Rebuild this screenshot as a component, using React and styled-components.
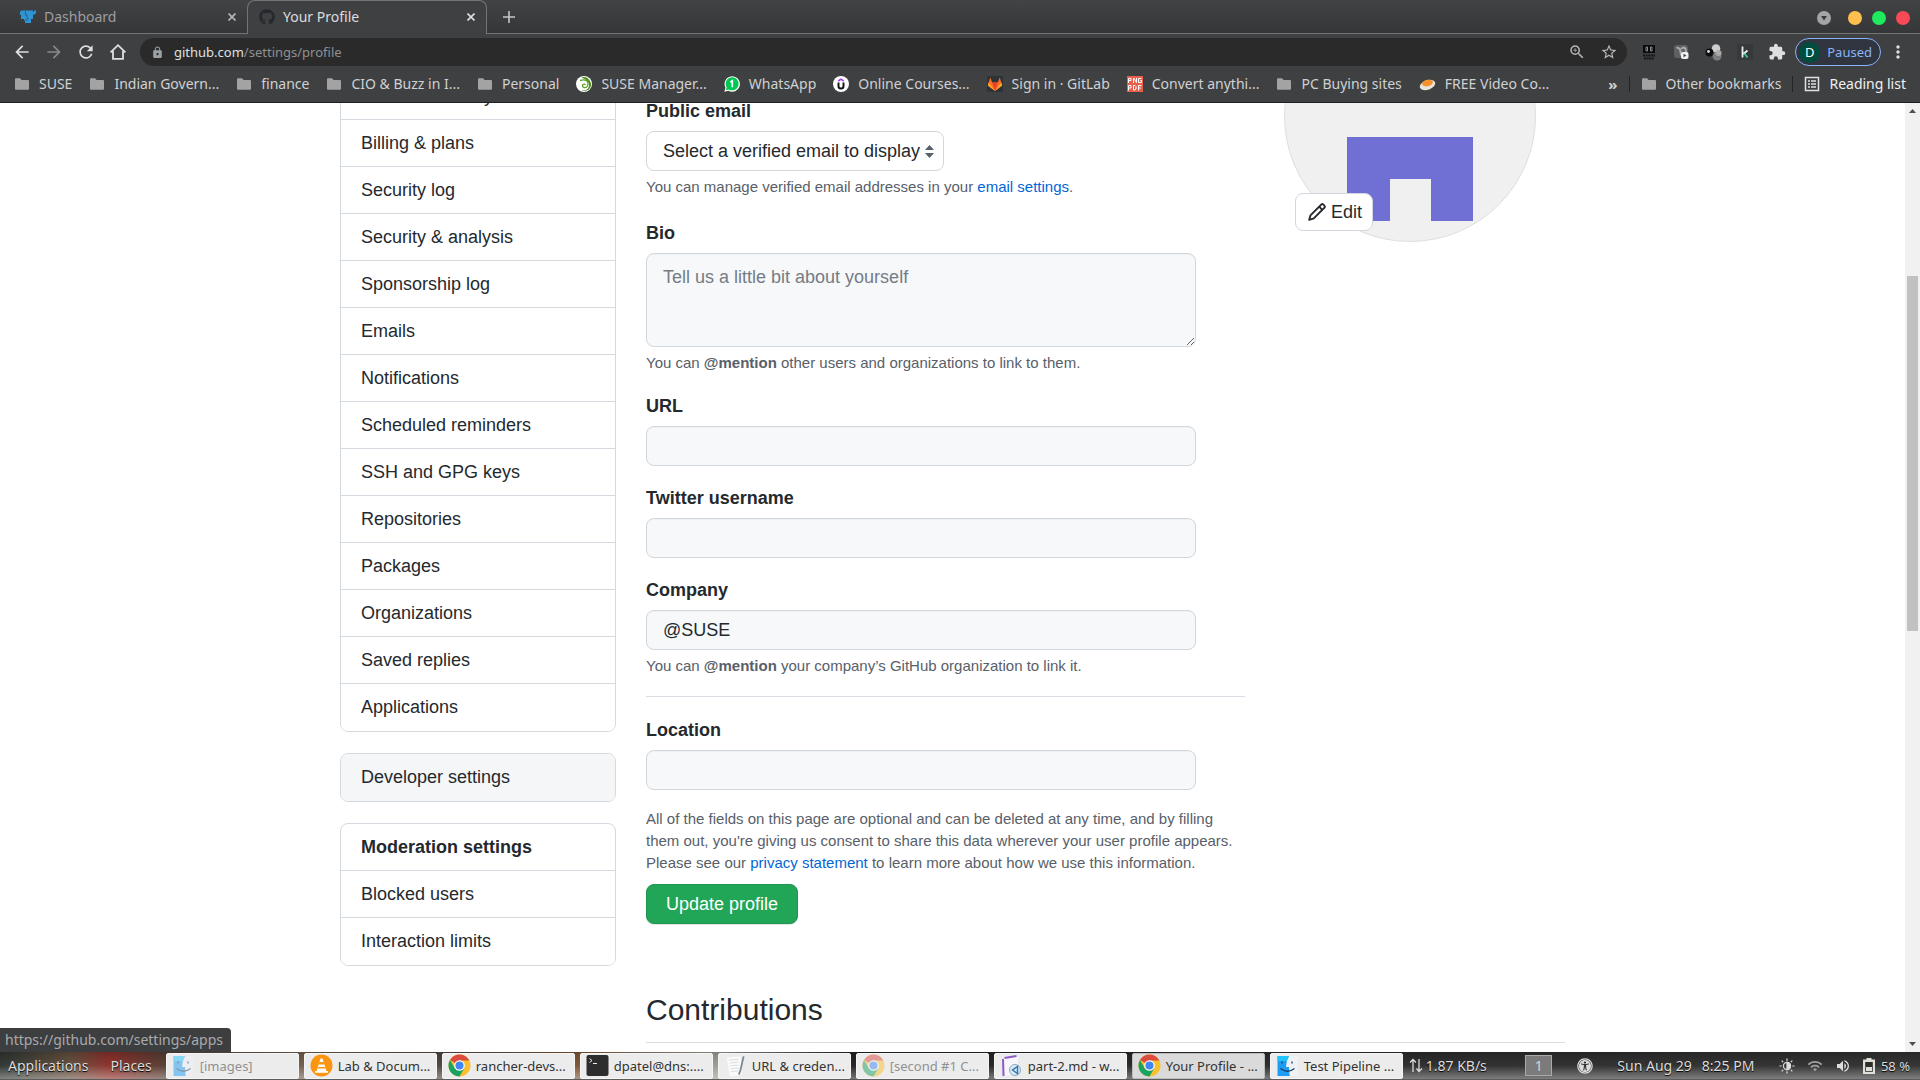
import React from "react";
import styled, { createGlobalStyle, css } from "styled-components";
import {
  MdArrowBack,
  MdArrowForward,
  MdRefresh,
  MdLock,
  MdZoomIn,
  MdStarBorder,
  MdExtension,
  MdMoreVert,
  MdWifi,
  MdVolumeUp,
} from "react-icons/md";
import { FaGithub, FaUniversalAccess } from "react-icons/fa";

const Global = createGlobalStyle`
  * { box-sizing: border-box; }
  body { margin: 0; background: #fff; overflow: hidden; }
  button, input, select, textarea { font: inherit; color: inherit; }
`;

const uiFont = css`
  font-family: "Noto Sans", "Open Sans", sans-serif;
  font-size: 14px;
`;

const Screen = styled.div`
  position: relative;
  display: flex;
  flex-direction: column;
  height: 100vh;
  overflow: hidden;
`;

/* ---------- browser frame ---------- */

const TabStrip = styled.header`
  ${uiFont}
  display: flex;
  height: 34px;
  flex: none;
  background: linear-gradient(#424345, #353638);
  box-shadow: inset 0 -1px #737476;
  color: #9d9ea0;
`;

const Tab = styled.div`
  display: flex;
  align-items: center;
  gap: 8px;
  width: ${(p) => (p.$active ? 240 : 247)}px;
  padding: 0 5px ${(p) => (p.$active ? 2 : 0)}px ${(p) => (p.$active ? 11 : 20)}px;
  ${(p) =>
    p.$active &&
    css`
      color: #dcddde;
      background: #3f4042;
      border: 1px solid #737476;
      border-bottom: 0;
      border-radius: 8px 8px 0 0;
    `}
`;

const TabTitle = styled.span`
  flex: 1;
  line-height: 20px;
`;

const PlainButton = styled.button`
  display: flex;
  align-items: center;
  justify-content: center;
  width: 20px;
  height: 20px;
  padding: 0;
  border: 0;
  background: none;
  color: ${(p) => p.$color || "#dedfe0"};
`;

const NewTab = styled(PlainButton)`
  width: 44px;
  height: 33px;
`;

const WindowControls = styled.div`
  display: flex;
  align-items: center;
  gap: 10px;
  margin-left: auto;
  padding: 2px 10px 0 0;
`;

const WindowDot = styled.button`
  width: 14px;
  height: 14px;
  padding: 0;
  border: 0;
  border-radius: 50%;
  background: ${(p) => p.$color};
`;

const TabSearch = styled(PlainButton)`
  width: 14px;
  height: 14px;
  margin-right: 7px;
`;

const Toolbar = styled.nav`
  ${uiFont}
  display: flex;
  align-items: center;
  gap: 12px;
  flex: none;
  height: 36px;
  padding: 0 12px;
  background: #3f4042;
`;

const Omnibox = styled.div`
  display: flex;
  flex: 1;
  align-items: center;
  height: 28px;
  padding: 0 8px 0 11px;
  gap: 12px;
  border-radius: 14px;
  background: #2a2a2b;
`;

const Address = styled.span`
  flex: 1;
  margin-left: -2px;
  color: #8f9092;
  font-size: 13px;
  line-height: 20px;
`;

const Host = styled.span`
  color: #dfe0e1;
`;

const ProfilePill = styled.button`
  display: flex;
  align-items: center;
  gap: 7px;
  height: 28px;
  margin: 0 -5px 0 -4px;
  padding: 0 8px 0 3px;
  border: 1px solid #8ab4f8;
  border-radius: 14px;
  background: #303540;
  color: #8ab4f8;
  font-size: 13px;
`;

const Initial = styled.span`
  width: 21px;
  height: 21px;
  border-radius: 50%;
  background: #004d40;
  color: #fff;
  line-height: 21px;
  text-align: center;
`;

const BookmarkBar = styled.nav`
  ${uiFont}
  display: flex;
  align-items: center;
  gap: 17px;
  flex: none;
  height: 33px;
  padding: 0 14px 5px;
  border-bottom: 1px solid #1d1e1f;
  background: #3f4042;
  color: #d0d1d2;
`;

const Bookmark = styled.a`
  display: flex;
  align-items: center;
  gap: 9px;
  color: ${(p) => (p.$bright ? "#f0f0f0" : "inherit")};
  line-height: 20px;
  text-decoration: none;
  white-space: nowrap;
`;

const Overflow = styled.span`
  margin-left: auto;
  font-size: 15px;
  font-weight: 700;
  line-height: 20px;
`;

const Separator = styled.span`
  width: 1px;
  height: 16px;
  margin: 0 -6px;
  background: #232425;
`;

/* ---------- page ---------- */

const Viewport = styled.div`
  position: relative;
  display: flex;
  flex: 1;
  min-height: 0;
  background: #fff;
  color: #24292e;
  font-family: "Liberation Sans", Arial, sans-serif;
  font-size: 18px;
  line-height: 26px;
`;

const Scroller = styled.div`
  flex: 1;
  overflow: hidden;
`;

/* The page is scrolled: its first menu row lies partly under the toolbar. */
const PageGrid = styled.div`
  display: grid;
  grid-template-columns: 276px minmax(0, 1fr);
  gap: 30px;
  align-items: start;
  max-width: 1225px;
  margin: -32px auto 0;
`;

const Sidebar = styled.aside`
  display: grid;
  gap: 21px;
  padding-top: 1px;
`;

const Menu = styled.nav`
  overflow: hidden;
  border: 1px solid #d4dae0;
  border-radius: 8px;
`;

const menuRow = css`
  display: block;
  margin: 0;
  padding: 10px 20px;
  font-size: inherit;
  &:not(:last-child) {
    border-bottom: 1px solid #d4dae0;
  }
  &:last-child {
    padding-bottom: 11px;
  }
`;

const MenuHeading = styled.h3`
  ${menuRow}
`;

const MenuLink = styled.a`
  ${menuRow}
  color: inherit;
  text-decoration: none;
  background: ${(p) => (p.$hovered ? "#f5f6f8" : "#fff")};
`;

const SectionTitle = styled.h2`
  margin: 0;
  padding-bottom: 10px;
  border-bottom: 1px solid #d8dee4;
  font-size: 30px;
  font-weight: 400;
  line-height: 45px;
`;

const ProfileGrid = styled.div`
  display: grid;
  grid-template-columns: minmax(0, 599px) 281px;
  gap: 39px;
  align-items: start;
  margin-bottom: 63px;
`;

const Form = styled.form`
  display: flex;
  flex-direction: column;
  gap: 18px;
  padding-top: 26px;
`;

const Field = styled.div`
  display: flex;
  flex-direction: column;
  align-items: flex-start;
`;

const Label = styled.label`
  margin-bottom: 6px;
  font-weight: 700;
  line-height: 28px;
`;

const control = css`
  height: 40px;
  padding: 0 16px;
  border: 1px solid #d1d7dd;
  border-radius: 8px;
  outline: 0;
`;

const Input = styled.input`
  ${control}
  width: 100%;
  max-width: 550px;
  background: #f6f8fa;
  box-shadow: inset 0 1px #eff1f3;
`;

const TextArea = styled.textarea`
  ${control}
  display: block;
  width: 100%;
  max-width: 550px;
  height: 94px;
  padding: 10px 16px;
  background: #f6f8fa;
  box-shadow: inset 0 1px #eff1f3;
  &::placeholder {
    color: #757c84;
    opacity: 1;
  }
`;

const SelectWrap = styled.div`
  position: relative;
`;

const Select = styled.select`
  ${control}
  width: 298px;
  padding: 0 20px 0 16px;
  appearance: none;
  background: #fff;
`;

const SelectArrows = styled.svg`
  position: absolute;
  top: 14px;
  right: 9px;
  pointer-events: none;
`;

const Note = styled.p`
  margin: 5px 0 ${(p) => (p.$loose ? 3 : 0)}px;
  color: #586069;
  font-size: 15px;
  line-height: 22px;
`;

const Consent = styled(Note)`
  margin: 0;
`;

const Link = styled.a`
  color: #0366d6;
  text-decoration: none;
`;

const Rule = styled.hr`
  width: 100%;
  height: 1px;
  margin: 1px 0;
  border: 0;
  background: #d8dee4;
`;

const Submit = styled.button`
  align-self: flex-start;
  height: 40px;
  margin-top: -8px;
  padding: 0 19px;
  border: 1px solid #1f9550;
  border-radius: 8px;
  background: #21a556;
  box-shadow: 0 1px 1px rgba(27, 31, 35, 0.12);
  color: #fff;
`;

const AvatarBox = styled.div`
  position: relative;
  width: 252px;
  margin-top: -81px;
`;

const AvatarArt = styled.svg`
  display: block;
  width: 252px;
  height: 252px;
`;

const EditButton = styled.button`
  position: absolute;
  top: 203px;
  left: 11px;
  display: flex;
  align-items: center;
  gap: 4px;
  height: 38px;
  padding: 0 10px 0 11px;
  border: 1px solid #d1d7dd;
  border-radius: 8px;
  background: #fff;
`;

const Scrollbar = styled.div`
  display: flex;
  flex-direction: column;
  align-items: center;
  width: 15px;
  background: #f1f1f1;
`;

const ScrollArrow = styled.svg`
  flex: none;
  width: 15px;
  height: 16px;
  fill: #505050;
`;

const ScrollSpace = styled.div`
  flex: ${(p) => p.$share};
`;

const ScrollThumb = styled.div`
  flex: 355;
  width: 11px;
  background: #c1c1c1;
`;

const StatusBubble = styled.div`
  ${uiFont}
  position: absolute;
  left: 0;
  bottom: 0;
  padding: 0 8px 0 5px;
  border-radius: 0 4px 0 0;
  background: #3d3e40;
  color: #a9aaab;
  line-height: 24px;
`;

/* ---------- desktop panel ---------- */

const Panel = styled.footer`
  ${uiFont}
  display: flex;
  align-items: center;
  flex: none;
  height: 28px;
  border-bottom: 1px solid #5c5c5c;
  background:
    linear-gradient(rgba(30, 30, 30, 0.2), rgba(255, 255, 255, 0.05) 50%, rgba(255, 255, 255, 0.4)),
    linear-gradient(90deg, #28302c, #5f4a38 70px, #8a2a24 110px, #4c3a30 170px, #6f5a48 300px, #4a4038 440px, #7a5030 578px, #9a9a90 716px, #1c1c1c 852px, #262626 1400px, #2b2b2b);
  color: #dcdcdc;
  white-space: nowrap;
`;

const PanelMenu = styled.button`
  padding: 0;
  border: 0;
  background: none;
  margin-left: ${(p) => p.$gap}px;
  text-shadow: 0 1px 1px #000;
`;

const Tasks = styled.div`
  display: flex;
  gap: 5px;
  flex: none;
  margin-left: 14px;
`;

const Task = styled.button`
  display: flex;
  align-items: center;
  gap: 5px;
  width: 133px;
  height: 26px;
  padding: 0 5px;
  border: 1px solid ${(p) => (p.$active ? "#bdbdbd" : "#f5f5f5")};
  border-radius: 2px;
  background: ${(p) => (p.$active ? "#dadada" : "#ececec")};
  color: ${(p) => (p.$faded ? "#919191" : "#333")};
  font-size: 13px;
  text-align: left;
  svg {
    flex: none;
    opacity: ${(p) => (p.$faded ? 0.5 : 1)};
  }
`;

const Tray = styled.div`
  display: flex;
  flex: 1;
  align-items: center;
  justify-content: space-between;
  padding: 0 10px 0 6px;
  text-shadow: 0 1px 1px #000;
`;

const TrayGroup = styled.div`
  display: flex;
  align-items: center;
  gap: ${(p) => p.$gap || 12}px;
  font-size: ${(p) => (p.$small ? 13 : 14)}px;
`;

const Workspace = styled.button`
  width: 27px;
  height: 21px;
  margin-left: 14px;
  padding: 0;
  border: 1px solid #a9a9a9;
  background: #7b7b7b;
  color: #d5d5d5;
  line-height: 19px;
`;

/* ---------- drawings ---------- */

const CloseIcon = () => (
  <svg width="8" height="8" viewBox="0 0 8 8" stroke="currentColor" strokeWidth="1.6">
    <path d="M.5.5l7 7M7.5.5l-7 7" />
  </svg>
);

const Folder = () => (
  <svg width="16" height="16" viewBox="0 0 16 16">
    <path d="M1 3.2q0-1 1-1h4l1.6 1.9h6.4q1 0 1 1v7.6q0 1-1 1H2q-1 0-1-1z" fill="#a3a3a3" />
  </svg>
);

const HomeIcon = () => (
  <svg width="18" height="18" viewBox="0 0 18 18" fill="none" stroke="currentColor" strokeWidth="1.8">
    <path d="M1.6 9.4L9 2.2l7.4 7.2M4 8v7.8h10V8" />
  </svg>
);

const CattleIcon = () => (
  <svg width="16" height="16" viewBox="0 0 16 16">
    <path d="M0 3l1-1.500h12V3h1V1.500h2V4l-1.500 1.500H13V10h-2v4H5v-2.500H4V10H1V6H0z" fill="#2f94d2" />
    <path d="M5.500 2v4H7v3.500h1.500M5 11h3" stroke="#2b5a7c" strokeWidth=".9" fill="none" />
  </svg>
);

const SuseIcon = () => (
  <svg width="16" height="16" viewBox="0 0 16 16">
    <circle cx="8" cy="8" r="8" fill="#fff" />
    <path d="M5 1.500A7.500 7.500 0 0 1 13 13.600Q9 16 5.500 14.500q6.500.5 7.500-4.500.5-6-8-8.500z" fill="#4f8f1f" />
    <path d="M4 4.500q8-2 8 3.500-.5 4-4 3.500Q5.500 10.500 7 8.500q1.500-1 2.500.5" fill="none" stroke="#5da12b" strokeWidth="1.300" />
  </svg>
);

const WhatsAppIcon = () => (
  <svg width="16" height="16" viewBox="0 0 16 16">
    <path d="M.3 15.700l1.200-4A7.700 7.700 0 1 1 4.500 14.700z" fill="#fff" />
    <path d="M1.800 14.200l.9-2.800A6.500 6.500 0 1 1 4.800 13.400z" fill="#00c853" />
    <path d="M6.300 6.200L8.300 4.800v6.400" fill="none" stroke="#fff" strokeWidth="1.600" />
  </svg>
);

const CourseIcon = () => (
  <svg width="16" height="16" viewBox="0 0 16 16" fill="none">
    <circle cx="8" cy="8" r="8" fill="#fff" />
    <path d="M5.300 5L8 3.200 10.700 5" stroke="#a435f0" strokeWidth="1.600" />
    <path d="M5.500 6.500v3.700q0 2.300 2.500 2.300t2.500-2.300V6.500" stroke="#111" strokeWidth="1.900" />
  </svg>
);

const GitLabIcon = () => (
  <svg width="16" height="16" viewBox="0 0 16 16">
    <rect width="16" height="16" fill="#2e3338" />
    <path d="M8 15L.8 9.500 3.200 1.500l2 5h5.600l2-5 2.400 8z" fill="#fc6d26" />
    <path d="M8 15L5.200 6.500h5.600z" fill="#e24329" />
    <path d="M8 15L.8 9.500l1-3.200zM8 15l7.200-5.500-1-3.200z" fill="#fca326" />
  </svg>
);

const ConvertIcon = () => (
  <svg width="16" height="16" viewBox="0 0 16 16">
    <rect width="16" height="16" fill="#e8604c" />
    <g fill="none" stroke="#fff" strokeWidth="1">
      <path d="M1.500 7V2.500h2.500v2H1.500M6.500 7V2.500h.8l2 4h.2V2M14.500 2.500h-3v4h3V4.500h-1.300" />
      <path d="M1.500 14.500v-5h2.500v2.500H1.500M6.500 9.500v4.500h1.500l1-1v-2.500l-1-1zM11.500 14.500v-5h3M11.500 12h2.500" />
    </g>
  </svg>
);

const VideoIcon = () => (
  <svg width="17" height="16" viewBox="0 0 17 16">
    <ellipse cx="8.500" cy="9" rx="8" ry="4.800" transform="rotate(-20 8.500 9)" fill="#e9e4dc" />
    <ellipse cx="8.500" cy="7" rx="5.500" ry="3.200" transform="rotate(-12 8.500 7)" fill="#f5922d" />
  </svg>
);

const ReadingIcon = () => (
  <svg width="16" height="16" viewBox="0 0 16 16" fill="none" stroke="#e0e0e0">
    <rect x="1.500" y="1.500" width="13" height="13" strokeWidth="1.500" />
    <path d="M4 5h2M7 5h5M4 8h2M7 8h5M4 11h2M7 11h5" strokeWidth="1.500" />
  </svg>
);

const DolbyIcon = () => (
  <svg width="16" height="16" viewBox="0 0 16 16">
    <rect x="2" y="1" width="12" height="8" fill="#0b0b0b" />
    <path d="M5 3v4h1.500V3zM9.500 3v4H11V3z" fill="none" stroke="#8a8a8a" />
    <path d="M2 11.500h12M3 14.500h10" stroke="#161616" strokeWidth="2" strokeDasharray="2 .6" />
  </svg>
);

const MaskIcon = () => (
  <svg width="16" height="16" viewBox="0 0 16 16">
    <rect x="1" y="1" width="14" height="13" rx="3" fill="#5f6062" />
    <path d="M3.500 4q2.500-1 4 3 0 3 1 4.500M8 5q2-2.500 4.500-.5l.5 4" fill="none" stroke="#aaa" strokeWidth="2" />
    <rect x="8" y="8" width="7.500" height="7" rx="2" fill="#f0f0f0" />
    <path d="M10.500 9.800l3 1.700-3 1.700z" fill="#444" />
  </svg>
);

const SpheresIcon = () => (
  <svg width="17" height="17" viewBox="0 0 17 17">
    <circle cx="11" cy="4.500" r="4.300" fill="#cfcfcf" />
    <circle cx="12" cy="12" r="4.500" fill="#7c7c7c" />
    <circle cx="13.500" cy="9" r="3" fill="#a9a9a9" />
    <circle cx="4.500" cy="8.500" r="4" fill="#0d0d0d" />
    <circle cx="3.500" cy="7.500" r="1.400" fill="#ddd" />
  </svg>
);

const KIcon = () => (
  <svg width="16" height="16" viewBox="0 0 16 16" fill="none" strokeWidth="1.800">
    <rect width="16" height="16" fill="#37383a" />
    <path d="M5.500 2.500v11M10.500 6.500l-4 3.500" stroke="#eee" />
    <path d="M7.500 9.500l3 4" stroke="#2fc7a0" />
  </svg>
);

const CaretIcon = () => (
  <svg width="14" height="14" viewBox="0 0 14 14">
    <circle cx="7" cy="7" r="7" fill="#a5a5a6" />
    <path d="M4 5h6L7 9.500z" fill="#3a3b3d" />
  </svg>
);

const PencilIcon = () => (
  <svg width="20" height="20" viewBox="0 0 16 16" fill="currentColor">
    <path
      fillRule="evenodd"
      d="M11.013 1.427a1.750 1.750 0 012.474 0l1.086 1.086a1.750 1.750 0 010 2.474l-8.610 8.610c-.210.210-.470.364-.756.445l-3.251.930a.750.750 0 01-.927-.928l.929-3.250a1.750 1.750 0 01.445-.758l8.610-8.610zm1.414 1.060a.250.250 0 00-.354 0L10.811 3.750l1.439 1.440 1.263-1.263a.250.250 0 000-.354l-1.086-1.086zM11.189 6.250L9.750 4.810l-6.286 6.287a.250.250 0 00-.064.108l-.558 1.953 1.953-.558a.249.249 0 00.108-.064l6.286-6.286z"
    />
  </svg>
);

const ChromeIcon = () => (
  <svg width="23" height="23" viewBox="0 0 48 48">
    <circle cx="24" cy="24" r="23" fill="#fbc02d" />
    <path d="M24 24L4.100 12.500A23 23 0 0 1 43.900 12.500H24z" fill="#dd4b3e" />
    <path d="M4.100 12.500A23 23 0 0 0 24 47l10-17.300H14z" fill="#1aa260" />
    <path d="M24 13h20l.8 1.300H24z" fill="#dd4b3e" />
    <circle cx="24" cy="24" r="11" fill="#fff" />
    <circle cx="24" cy="24" r="8.500" fill="#4285f4" />
  </svg>
);

const FinderIcon = () => (
  <svg width="23" height="22" viewBox="0 0 22 22">
    <rect x="1" y="1" width="20" height="20" fill="#eef1f6" />
    <path d="M1 1h11.500Q9.500 6 9.500 12h3q0 5 .8 9H1z" fill="#1e9df5" />
    <path d="M1 1h11.500q-1.500 2.500-2.300 5H1z" fill="#22c5fb" />
    <path d="M5.500 6.500v2M15.500 6.500v2M4 13.500q7 5.500 14 0" fill="none" stroke="#1d3d66" strokeWidth="1.300" />
  </svg>
);

const VlcIcon = () => (
  <svg width="23" height="23" viewBox="0 0 23 23">
    <circle cx="11.500" cy="11.500" r="11" fill="#fb9510" />
    <path d="M10.500 4.500h2l4 13h-10z" fill="#fff" />
    <path d="M9.400 8h4.200l.8 2.500H8.600zM8 13h7l.5 1.500h-8z" fill="#fb9510" />
    <path d="M5 17h13v1.800H5z" fill="#fff" />
  </svg>
);

const TerminalIcon = () => (
  <svg width="23" height="21" viewBox="0 0 22 21">
    <rect width="22" height="21" rx="2" fill="#2d2d2d" />
    <path d="M3 3.500l2.500 2L3 7.500M6.500 8.500h4" fill="none" stroke="#eee" />
  </svg>
);

const EditorIcon = () => (
  <svg width="23" height="22" viewBox="0 0 24 22">
    <path d="M3 2l14-1 2 19-13 2z" fill="#fafafa" />
    <path d="M5 5l10-1M6 8l9-1M6 11l9-1M7 14l9-1M7 17l9-1" stroke="#d9dde0" />
    <path d="M20.500 1L17 16l-1.500 4" fill="none" stroke="#76868f" strokeWidth="1.800" />
  </svg>
);

const DocIcon = () => (
  <svg width="23" height="22" viewBox="0 0 22 22">
    <path d="M3 3l14-2 1 17-13 3z" fill="#f7f7fb" />
    <path d="M3 21L2.500 4M4 3l12-2" stroke="#8e5cc9" strokeWidth="2" fill="none" />
    <circle cx="14.500" cy="15" r="5.500" fill="#dfeaf3" stroke="#8caac2" />
    <path d="M17 11.500v7l-5-3.500z" fill="none" stroke="#2b79b8" strokeWidth="1.500" />
  </svg>
);

const BrightnessIcon = () => (
  <svg width="16" height="16" viewBox="0 0 18 18" stroke="#dcdcdc" fill="none" strokeWidth="1.400">
    <circle cx="9" cy="9" r="4" />
    <path d="M9 5a4 4 0 0 1 0 8z" fill="#dcdcdc" />
    <path d="M9 .5v2.500M9 15v2.500M.5 9H3M15 9h2.500M3 3l1.700 1.700M13.300 13.300L15 15M15 3l-1.700 1.700M4.700 13.300L3 15" />
  </svg>
);

const BatteryIcon = () => (
  <svg width="12" height="16" viewBox="0 0 12 16">
    <path d="M3.500 0h5v1.500H12V16H0V1.500h3.500z" fill="#dfdfd8" />
    <path d="M2.200 4h7.600v9.800H2.200z" fill="#2c2c2c" />
    <path d="M3 9h6v4H3z" fill="#dfdfd8" />
  </svg>
);

const NetIcon = () => (
  <svg width="14" height="15" viewBox="0 0 14 15" fill="none" stroke="#dcdcdc" strokeWidth="1.300">
    <path d="M4 14V1.500M1 4.500l3-3 3 3M10 1v12.500M7.500 10.500l2.500 3 3-3" />
  </svg>
);

/* ---------- data ---------- */

const bookmarks = [
  [Folder, "SUSE"],
  [Folder, "Indian Govern..."],
  [Folder, "finance"],
  [Folder, "CIO & Buzz in I..."],
  [Folder, "Personal"],
  [SuseIcon, "SUSE Manager..."],
  [WhatsAppIcon, "WhatsApp"],
  [CourseIcon, "Online Courses..."],
  [GitLabIcon, "Sign in · GitLab"],
  [ConvertIcon, "Convert anythi..."],
  [Folder, "PC Buying sites"],
  [VideoIcon, "FREE Video Co..."],
];

const accountMenu = [
  "Account security",
  "Billing & plans",
  "Security log",
  "Security & analysis",
  "Sponsorship log",
  "Emails",
  "Notifications",
  "Scheduled reminders",
  "SSH and GPG keys",
  "Repositories",
  "Packages",
  "Organizations",
  "Saved replies",
  "Applications",
];

const tasks = [
  { icon: FinderIcon, name: "[images]", faded: true },
  { icon: VlcIcon, name: "Lab & Docum..." },
  { icon: ChromeIcon, name: "rancher-devs..." },
  { icon: TerminalIcon, name: "dpatel@dns:...." },
  { icon: EditorIcon, name: "URL & creden..." },
  { icon: ChromeIcon, name: "[second #1 C...", faded: true },
  { icon: DocIcon, name: "part-2.md - w..." },
  { icon: ChromeIcon, name: "Your Profile - ...", active: true },
  { icon: FinderIcon, name: "Test Pipeline ..." },
];

function TextField({ id, label, value = "", children }) {
  return (
    <Field>
      <Label htmlFor={id}>{label}</Label>
      <Input id={id} type="text" defaultValue={value} />
      {children}
    </Field>
  );
}

function BrowserFrame() {
  return (
    <>
      <TabStrip>
        <Tab>
          <CattleIcon />
          <TabTitle>Dashboard</TabTitle>
          <PlainButton aria-label="Close Dashboard" $color="#b5b6b7">
            <CloseIcon />
          </PlainButton>
        </Tab>
        <Tab $active>
          <FaGithub size={16} color="#24292e" />
          <TabTitle>Your Profile</TabTitle>
          <PlainButton aria-label="Close Your Profile">
            <CloseIcon />
          </PlainButton>
        </Tab>
        <NewTab aria-label="New tab" $color="#c5c6c7">
          <svg width="12" height="12" viewBox="0 0 12 12" stroke="currentColor" strokeWidth="1.6">
            <path d="M6 0v12M0 6h12" />
          </svg>
        </NewTab>
        <WindowControls>
          <TabSearch aria-label="Search tabs">
            <CaretIcon />
          </TabSearch>
          <WindowDot aria-label="Minimize" $color="#fdc04e" />
          <WindowDot aria-label="Maximize" $color="#1fe95c" />
          <WindowDot aria-label="Close window" $color="#f84a56" />
        </WindowControls>
      </TabStrip>
      <Toolbar>
        <PlainButton aria-label="Back"><MdArrowBack size={20} /></PlainButton>
        <PlainButton aria-label="Forward" $color="#87888a"><MdArrowForward size={20} /></PlainButton>
        <PlainButton aria-label="Reload"><MdRefresh size={20} /></PlainButton>
        <PlainButton aria-label="Home"><HomeIcon /></PlainButton>
        <Omnibox>
          <MdLock size={13} color="#9aa0a6" />
          <Address><Host>github.com</Host>/settings/profile</Address>
          <PlainButton aria-label="Zoom" $color="#b4b5b6"><MdZoomIn size={18} /></PlainButton>
          <PlainButton aria-label="Bookmark this tab" $color="#b4b5b6"><MdStarBorder size={18} /></PlainButton>
        </Omnibox>
        <PlainButton aria-label="Dolby"><DolbyIcon /></PlainButton>
        <PlainButton aria-label="Recorder"><MaskIcon /></PlainButton>
        <PlainButton aria-label="Spheres"><SpheresIcon /></PlainButton>
        <PlainButton aria-label="Keeper"><KIcon /></PlainButton>
        <PlainButton aria-label="Extensions"><MdExtension size={18} /></PlainButton>
        <ProfilePill>
          <Initial>D</Initial>
          Paused
        </ProfilePill>
        <PlainButton aria-label="Menu"><MdMoreVert size={20} /></PlainButton>
      </Toolbar>
      <BookmarkBar>
        {bookmarks.map(([Icon, name]) => (
          <Bookmark key={name} href="#">
            <Icon />
            {name}
          </Bookmark>
        ))}
        <Overflow>»</Overflow>
        <Separator />
        <Bookmark href="#">
          <Folder />
          Other bookmarks
        </Bookmark>
        <Separator />
        <Bookmark href="#" $bright>
          <ReadingIcon />
          Reading list
        </Bookmark>
      </BookmarkBar>
    </>
  );
}

function SettingsSidebar() {
  return (
    <Sidebar>
      <Menu>
        {accountMenu.map((name) => (
          <MenuLink key={name} href="#">{name}</MenuLink>
        ))}
      </Menu>
      <Menu>
        <MenuLink href="#" $hovered>Developer settings</MenuLink>
      </Menu>
      <Menu>
        <MenuHeading>Moderation settings</MenuHeading>
        <MenuLink href="#">Blocked users</MenuLink>
        <MenuLink href="#">Interaction limits</MenuLink>
      </Menu>
    </Sidebar>
  );
}

function ProfileForm() {
  return (
    <Form>
      <Field>
        <Label htmlFor="email">Public email</Label>
        <SelectWrap>
          <Select id="email">
            <option>Select a verified email to display</option>
          </Select>
          <SelectArrows width="11" height="13" viewBox="0 0 11 13" fill="#586069">
            <path d="M5.500 0l4.500 5H1zM5.500 13L1 8h9z" />
          </SelectArrows>
        </SelectWrap>
        <Note $loose>
          You can manage verified email addresses in your <Link href="#">email settings</Link>.
        </Note>
      </Field>
      <Field>
        <Label htmlFor="bio">Bio</Label>
        <TextArea id="bio" placeholder="Tell us a little bit about yourself" />
        <Note>
          You can <strong>@mention</strong> other users and organizations to link to them.
        </Note>
      </Field>
      <TextField id="url" label="URL" />
      <TextField id="twitter" label="Twitter username" />
      <TextField id="company" label="Company" value="@SUSE">
        <Note>
          You can <strong>@mention</strong> your company’s GitHub organization to link it.
        </Note>
      </TextField>
      <Rule />
      <TextField id="location" label="Location" />
      <Consent>
        All of the fields on this page are optional and can be deleted at any time, and by filling
        them out, you're giving us consent to share this data wherever your user profile appears.
        Please see our <Link href="#">privacy statement</Link> to learn more about how we use this
        information.
      </Consent>
      <Submit type="button">Update profile</Submit>
    </Form>
  );
}

function ProfilePicture() {
  return (
    <AvatarBox>
      <AvatarArt viewBox="0 0 252 252">
        <circle cx="126" cy="126" r="125.500" fill="#f0f0f0" stroke="#dedede" />
        <path d="M63 147h126v84h-42v-42h-41v42H63z" fill="#706fd3" />
      </AvatarArt>
      <EditButton>
        <PencilIcon />
        Edit
      </EditButton>
    </AvatarBox>
  );
}

function DesktopPanel() {
  return (
    <Panel>
      <PanelMenu $gap={8}>Applications</PanelMenu>
      <PanelMenu $gap={22}>Places</PanelMenu>
      <Tasks>
        {tasks.map(({ icon: Icon, name, faded, active }) => (
          <Task key={name} $faded={faded} $active={active}>
            <Icon />
            {name}
          </Task>
        ))}
      </Tasks>
      <Tray>
        <TrayGroup $gap={3}>
          <NetIcon />
          1.87 KB/s
        </TrayGroup>
        <Workspace>1</Workspace>
        <FaUniversalAccess size={16} />
        <TrayGroup $gap={10}>
          <span>Sun Aug 29</span>
          <span>8:25 PM</span>
        </TrayGroup>
        <TrayGroup $small>
          <BrightnessIcon />
          <MdWifi size={16} color="#a0a0a0" />
          <MdVolumeUp size={16} />
          <TrayGroup $gap={6} $small>
            <BatteryIcon />
            58 %
          </TrayGroup>
        </TrayGroup>
      </Tray>
    </Panel>
  );
}

export default function App() {
  return (
    <Screen>
      <Global />
      <BrowserFrame />
      <Viewport>
        <Scroller>
          <PageGrid>
            <SettingsSidebar />
            <main>
              <ProfileGrid>
                <ProfileForm />
                <ProfilePicture />
              </ProfileGrid>
              <SectionTitle>Contributions</SectionTitle>
            </main>
          </PageGrid>
        </Scroller>
        <Scrollbar>
          <ScrollArrow viewBox="0 0 15 16"><path d="M7.500 6l3.500 4H4z" /></ScrollArrow>
          <ScrollSpace $share={157} />
          <ScrollThumb />
          <ScrollSpace $share={405} />
          <ScrollArrow viewBox="0 0 15 16"><path d="M7.500 10L4 6h7z" /></ScrollArrow>
        </Scrollbar>
        <StatusBubble>https://github.com/settings/apps</StatusBubble>
      </Viewport>
      <DesktopPanel />
    </Screen>
  );
}
